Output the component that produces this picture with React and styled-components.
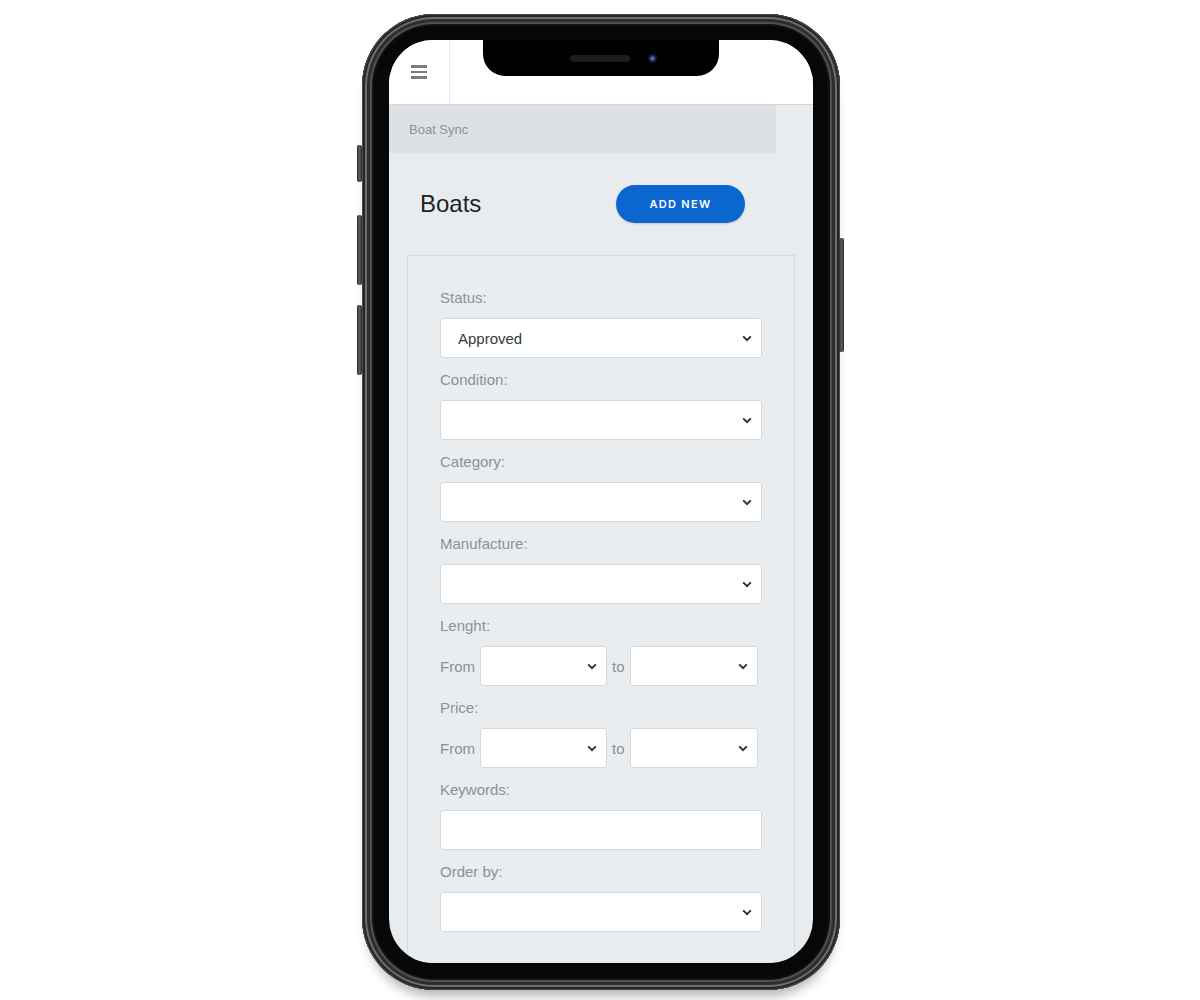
import styled, { createGlobalStyle } from 'styled-components';

const GlobalStyle = createGlobalStyle`
  body {
    margin: 0;
    background: #ffffff;
    font-family: "Liberation Sans", Arial, sans-serif;
  }
`;

const Stage = styled.div`
  height: 1000px;
  box-sizing: border-box;
  padding-top: 14px;
  display: flex;
  justify-content: center;
  overflow: hidden;
`;

const Phone = styled.div`
  position: relative;
  width: 478px;
  height: 976px;
  margin-left: 2px;
  box-sizing: border-box;
  padding: 26px 27px 27px;
  border-radius: 72px;
  background: #070707;
  box-shadow:
    inset 0 0 0 1px #4a4a4a,
    inset 0 0 0 3px #262626,
    inset 0 0 0 5px #6e6e6e,
    inset 0 0 0 8px #2e2e2e,
    inset 0 0 0 10px #505050,
    inset 0 0 0 12px #111111,
    0 12px 12px -6px rgba(0, 0, 0, 0.3);
`;

const SideButton = styled.div`
  position: absolute;
  top: ${p => p.$top}px;
  height: ${p => p.$height}px;
  width: 5px;
  ${p => (p.$right ? 'right: -4px;' : 'left: -5px;')}
  border-radius: 2px;
  background: linear-gradient(90deg, #2a2a2a, #5e5e5e, #2a2a2a);
`;

const Screen = styled.div`
  position: relative;
  height: 100%;
  border-radius: 44px;
  overflow: hidden;
  background: #e9ecef;
  display: flex;
  flex-direction: column;
`;

const Notch = styled.div`
  position: absolute;
  top: 0;
  left: 94px;
  width: 236px;
  height: 36px;
  background: #000;
  border-radius: 0 0 22px 22px;
  display: flex;
  align-items: center;
  justify-content: center;
  gap: 18px;
  padding-left: 24px;
  box-sizing: border-box;
`;

const Speaker = styled.div`
  width: 60px;
  height: 7px;
  border-radius: 4px;
  background: #1d1d1f;
`;

const Camera = styled.div`
  width: 9px;
  height: 9px;
  border-radius: 50%;
  background: radial-gradient(circle at 50% 50%, #4a6fc0 0 20%, #1a2238 45%, #0d0d12 100%);
`;

const Header = styled.div`
  height: 64px;
  flex-shrink: 0;
  background: #ffffff;
  border-bottom: 1px solid #d3d7db;
  display: flex;
`;

const MenuCell = styled.div`
  width: 61px;
  border-right: 1px solid #e8e8e8;
  display: flex;
  align-items: center;
  padding-left: 22px;
  box-sizing: border-box;
`;

const Burger = styled.div`
  display: flex;
  flex-direction: column;
  gap: 3px;
  span {
    display: block;
    width: 16px;
    height: 2.5px;
    background: #7c7c7c;
  }
`;

const Breadcrumb = styled.div`
  width: 387px;
  height: 48px;
  flex-shrink: 0;
  background: #dde1e5;
  display: flex;
  align-items: center;
  padding-left: 20px;
  box-sizing: border-box;
  font-size: 13px;
  color: #8c9298;
`;

const TitleRow = styled.div`
  display: flex;
  align-items: center;
  justify-content: space-between;
  padding: 32px 68px 0 31px;
`;

const Title = styled.h1`
  margin: 0;
  font-size: 24px;
  font-weight: 400;
  color: #1f2327;
`;

const AddButton = styled.button`
  all: unset;
  width: 129px;
  height: 38px;
  border-radius: 19px;
  background: #0b66d0;
  color: #ffffff;
  font-family: Inter, "Liberation Sans", sans-serif;
  font-size: 11px;
  font-weight: 600;
  letter-spacing: 1.3px;
  text-align: center;
  box-shadow: 0 1px 2px rgba(0, 0, 0, 0.15);
`;

const Card = styled.div`
  margin: 32px 18px 0;
  border: 1px solid #d5d9dd;
  border-bottom: none;
  background: #eaedf0;
  padding: 33px 32px 0;
  flex: 1;
`;

const Field = styled.div`
  display: flex;
  flex-direction: column;
  margin-bottom: 13px;
`;

const Label = styled.div`
  font-size: 15px;
  line-height: 18px;
  color: #8b9096;
  margin-bottom: 11px;
`;

const SelectBox = styled.div`
  width: ${p => (p.$width ? `${p.$width}px` : '100%')};
  height: 40px;
  box-sizing: border-box;
  background: #ffffff;
  border: 1px solid #d6dadd;
  border-radius: 3px;
  display: flex;
  align-items: center;
  justify-content: space-between;
  padding: 0 9px 0 17px;
  font-size: 15px;
  color: #333a40;
`;

const TextInput = styled.input`
  width: 100%;
  height: 40px;
  box-sizing: border-box;
  background: #ffffff;
  border: 1px solid #d6dadd;
  border-radius: 3px;
  outline: none;
`;

const RangeRow = styled.div`
  display: flex;
  align-items: center;
  gap: 5px;
  font-size: 15px;
  color: #8b9096;
`;

function Chevron() {
  return (
    <svg width="10" height="7" viewBox="0 0 10 7">
      <path d="M1.2 1.4 L5 5.2 L8.8 1.4" fill="none" stroke="#2f3337" strokeWidth="2" />
    </svg>
  );
}

function Select({ value, width }) {
  return (
    <SelectBox $width={width}>
      <span>{value}</span>
      <Chevron />
    </SelectBox>
  );
}

function SelectField({ label, value }) {
  return (
    <Field>
      <Label>{label}</Label>
      <Select value={value} />
    </Field>
  );
}

function RangeField({ label }) {
  return (
    <Field>
      <Label>{label}</Label>
      <RangeRow>
        <span>From</span>
        <Select width={127} />
        <span>to</span>
        <Select width={128} />
      </RangeRow>
    </Field>
  );
}

export default function App() {
  return (
    <>
      <GlobalStyle />
      <Stage>
        <Phone>
          <SideButton $top={131} $height={37} />
          <SideButton $top={201} $height={70} />
          <SideButton $top={291} $height={70} />
          <SideButton $right $top={224} $height={114} />
          <Screen>
            <Header>
              <MenuCell>
                <Burger>
                  <span />
                  <span />
                  <span />
                </Burger>
              </MenuCell>
            </Header>
            <Breadcrumb>Boat Sync</Breadcrumb>
            <TitleRow>
              <Title>Boats</Title>
              <AddButton>ADD NEW</AddButton>
            </TitleRow>
            <Card>
              <SelectField label="Status:" value="Approved" />
              <SelectField label="Condition:" />
              <SelectField label="Category:" />
              <SelectField label="Manufacture:" />
              <RangeField label="Lenght:" />
              <RangeField label="Price:" />
              <Field>
                <Label>Keywords:</Label>
                <TextInput />
              </Field>
              <SelectField label="Order by:" />
            </Card>
            <Notch>
              <Speaker />
              <Camera />
            </Notch>
          </Screen>
        </Phone>
      </Stage>
    </>
  );
}
